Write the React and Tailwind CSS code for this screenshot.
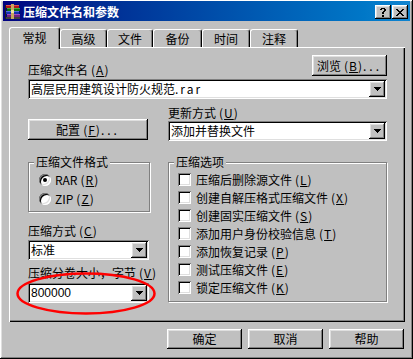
import React from "react";

// win98 bevels
const raised =
  "shadow-[inset_-1px_-1px_#000,inset_1px_1px_#fff,inset_-2px_-2px_#808080,inset_2px_2px_#dfdfdf]";
const sunken =
  "shadow-[inset_1px_1px_#808080,inset_-1px_-1px_#fff,inset_2px_2px_#000,inset_-2px_-2px_#dfdfdf]";

const Arrow = () => (
  <svg width="7" height="4" shapeRendering="crispEdges">
    <path d="M0 0h7v1H0zM1 1h5v1H1zM2 2h3v1H2zM3 3h1v1H3z" fill="#000" />
  </svg>
);

const Button = ({ children, className = "" }) => (
  <div
    className={`flex items-center justify-center bg-[#c0c0c0] text-[12px] leading-[12px] ${raised} ${className}`}
  >
    {children}
  </div>
);

const Combo = ({ children, className = "" }) => (
  <div className={`flex h-[20px] bg-white p-[2px] ${sunken} ${className}`}>
    <div className="flex flex-1 items-center overflow-hidden whitespace-nowrap pl-[1px] text-[12px] leading-[12px]">
      {children}
    </div>
    <div className={`flex w-[16px] items-center justify-center bg-[#c0c0c0] ${raised}`}>
      <Arrow />
    </div>
  </div>
);

const Group = ({ title, className = "", children }) => (
  <div
    className={`border border-[#808080] shadow-[1px_1px_0_#fff,inset_1px_1px_0_#fff] ${className}`}
  >
    <div className="-mt-[7px] ml-[5px] w-fit bg-[#c0c0c0] px-[2px] text-[12px] leading-[12px]">
      {title}
    </div>
    {children}
  </div>
);

const Key = ({ k }) => (
  <span className="ml-[3px] tracking-[1px]">
    (<u>{k}</u>)
  </span>
);

const Check = ({ label, k }) => (
  <div className="flex h-[18px] items-start gap-[5px]">
    <div className={`h-[13px] w-[13px] bg-white ${sunken}`} />
    <span className="text-[12px] leading-[13px]">
      {label}
      <Key k={k} />
    </span>
  </div>
);

const Radio = ({ label, k, checked }) => (
  <div className="flex h-[19px] items-start gap-[4px]">
    <div
      className={`flex h-[12px] w-[12px] items-center justify-center rounded-full bg-white ${sunken}`}
    >
      {checked && <div className="h-[4px] w-[4px] rounded-full bg-black" />}
    </div>
    <span className="text-[12px] leading-[12px]">
      {label}
      <Key k={k} />
    </span>
  </div>
);

const Label = ({ children, className = "" }) => (
  <div className={`h-[12px] whitespace-nowrap text-[12px] leading-[12px] ${className}`}>
    {children}
  </div>
);

const RarIcon = () => (
  <svg width="16" height="16" viewBox="0 0 16 16" shapeRendering="crispEdges">
    <rect x="1" y="1" width="13" height="3" fill="#b01818" />
    <rect x="1" y="1" width="13" height="1" fill="#e05050" />
    <rect x="2" y="4" width="13" height="3" fill="#107010" />
    <rect x="2" y="4" width="13" height="1" fill="#40b040" />
    <rect x="1" y="7" width="13" height="3" fill="#1830b0" />
    <rect x="1" y="7" width="13" height="1" fill="#5070e0" />
    <rect x="2" y="10" width="13" height="3" fill="#702080" />
    <rect x="2" y="10" width="13" height="1" fill="#a050c0" />
    <rect x="1" y="13" width="14" height="2" fill="#404040" />
    <rect x="6" y="0" width="3" height="15" fill="#c8a860" />
    <rect x="6" y="6" width="3" height="3" fill="#f0e0a0" />
    <rect x="0" y="1" width="1" height="14" fill="#202020" />
  </svg>
);

const Tab = ({ children, w, active }) => (
  <div
    className={`flex items-center justify-center rounded-t-[3px] border-l border-t border-r border-white border-r-black bg-[#c0c0c0] text-[12px] leading-[12px] shadow-[inset_-1px_0_#808080] ${w} ${
      active ? "relative z-10 -mb-[2px] h-[22px] pb-[2px]" : "h-[18px]"
    }`}
  >
    {children}
  </div>
);

export default function App() {
  return (
    <div
      className={`h-[359px] w-[413px] bg-[#c0c0c0] px-[3px] pt-[1px] font-['Noto_Sans_CJK_SC',sans-serif] text-black ${raised}`}
    >
      {/* title bar */}
      <div className="flex h-[20px] items-center bg-linear-to-r from-[#000080] to-[#1084d0] pl-[2px] pr-[2px] pt-[2px]">
        <RarIcon />
        <div className="ml-[2px] text-[12px] font-bold leading-[12px] text-white">
          压缩文件名和参数
        </div>
        <div className="ml-auto flex gap-[1px]">
          <div className={`flex h-[14px] w-[16px] items-center justify-center bg-[#c0c0c0] ${raised}`}>
            <svg width="6" height="9" shapeRendering="crispEdges">
              <path
                d="M1 0h4v1H1zM0 1h2v1H0zM4 1h2v1H4zM4 2h2v1H4zM3 3h2v1H3zM2 4h2v1H2zM2 5h2v1H2zM2 7h2v2H2z"
                fill="#000"
              />
            </svg>
          </div>
          <div className={`flex h-[14px] w-[16px] items-center justify-center bg-[#c0c0c0] ${raised}`}>
            <svg width="8" height="7" shapeRendering="crispEdges">
              <path
                d="M0 0h2v1H0zM6 0h2v1H6zM1 1h2v1H1zM5 1h2v1H5zM2 2h4v1H2zM3 3h2v1H3zM2 4h4v1H2zM1 5h2v1H1zM5 5h2v1H5zM0 6h2v1H0zM6 6h2v1H6z"
                fill="#000"
              />
            </svg>
          </div>
        </div>
      </div>

      {/* tabs + panel */}
      <div className="ml-[6px] mr-[5px] mt-[6px]">
        <div className="flex h-[20px] items-end">
          <Tab w="w-[51px]" active>
            常规
          </Tab>
          <Tab w="w-[47px]">高级</Tab>
          <Tab w="w-[46px]">文件</Tab>
          <Tab w="w-[49px]">备份</Tab>
          <Tab w="w-[48px]">时间</Tab>
          <Tab w="w-[48px]">注释</Tab>
        </div>

        <div
          className={`relative h-[275px] bg-[#c0c0c0] pl-[19px] pr-[18px] pt-[8px] shadow-[inset_1px_1px_#fff,inset_-1px_-1px_#000,inset_-2px_-2px_#808080]`}
        >
          <div className="flex h-[21px] items-end justify-between">
            <Label>
              压缩文件名<Key k="A" />
            </Label>
            <Button className="h-[21px] w-[75px]">
              浏览<Key k="B" />
              <span className="tracking-[3px]">...</span>
            </Button>
          </div>
          <Combo className="mt-[3px]">
            高层民用建筑设计防火规范<span className="tracking-[2px]">.rar</span>
          </Combo>

          <div className="grid grid-cols-[121px_219px] gap-x-[19px]">
            {/* left column */}
            <div className="flex flex-col">
              <Button className="mt-[20px] h-[21px] w-[120px]">
                配置<Key k="F" />
                <span className="tracking-[3px]">...</span>
              </Button>
              <Group title="压缩文件格式" className="mt-[22px] h-[50px] w-[122px]">
                <div className="ml-[10px] mt-[6px]">
                  <Radio label="RAR" k="R" checked />
                  <Radio label="ZIP" k="Z" />
                </div>
              </Group>
              <Label className="mt-[13px]">
                压缩方式<Key k="C" />
              </Label>
              <Combo className="mt-[3px]">标准</Combo>
              <Label className="mt-[7px]">
                压缩分卷大小，字节<Key k="V" />
              </Label>
              <Combo className="mt-[4px]">
                <span className="font-['Liberation_Sans',sans-serif]">800000</span>
              </Combo>
            </div>

            {/* right column */}
            <div className="flex flex-col">
              <Label className="mt-[8px]">
                更新方式<Key k="U" />
              </Label>
              <Combo className="mt-[2px]">添加并替换文件</Combo>
              <Group title="压缩选项" className="mt-[21px] h-[140px]">
                <div className="ml-[9px] mt-[5px]">
                  <Check label="压缩后删除源文件" k="L" />
                  <Check label="创建自解压格式压缩文件" k="X" />
                  <Check label="创建固实压缩文件" k="S" />
                  <Check label="添加用户身份校验信息" k="T" />
                  <Check label="添加恢复记录" k="P" />
                  <Check label="测试压缩文件" k="E" />
                  <Check label="锁定压缩文件" k="K" />
                </div>
              </Group>
            </div>
          </div>

          {/* red marker ellipse */}
          <svg
            className="absolute left-[7px] top-[225px]"
            width="140"
            height="43"
            viewBox="0 0 140 43"
          >
            <ellipse
              cx="70"
              cy="21.5"
              rx="68.5"
              ry="20"
              fill="none"
              stroke="#ff0000"
              strokeWidth="2.5"
            />
          </svg>
        </div>
      </div>

      {/* dialog buttons */}
      <div className="mr-[6px] mt-[7px] flex justify-end gap-[6px]">
        <Button className="h-[20px] w-[75px]">确定</Button>
        <Button className="h-[20px] w-[75px]">取消</Button>
        <Button className="h-[20px] w-[75px]">帮助</Button>
      </div>
    </div>
  );
}
